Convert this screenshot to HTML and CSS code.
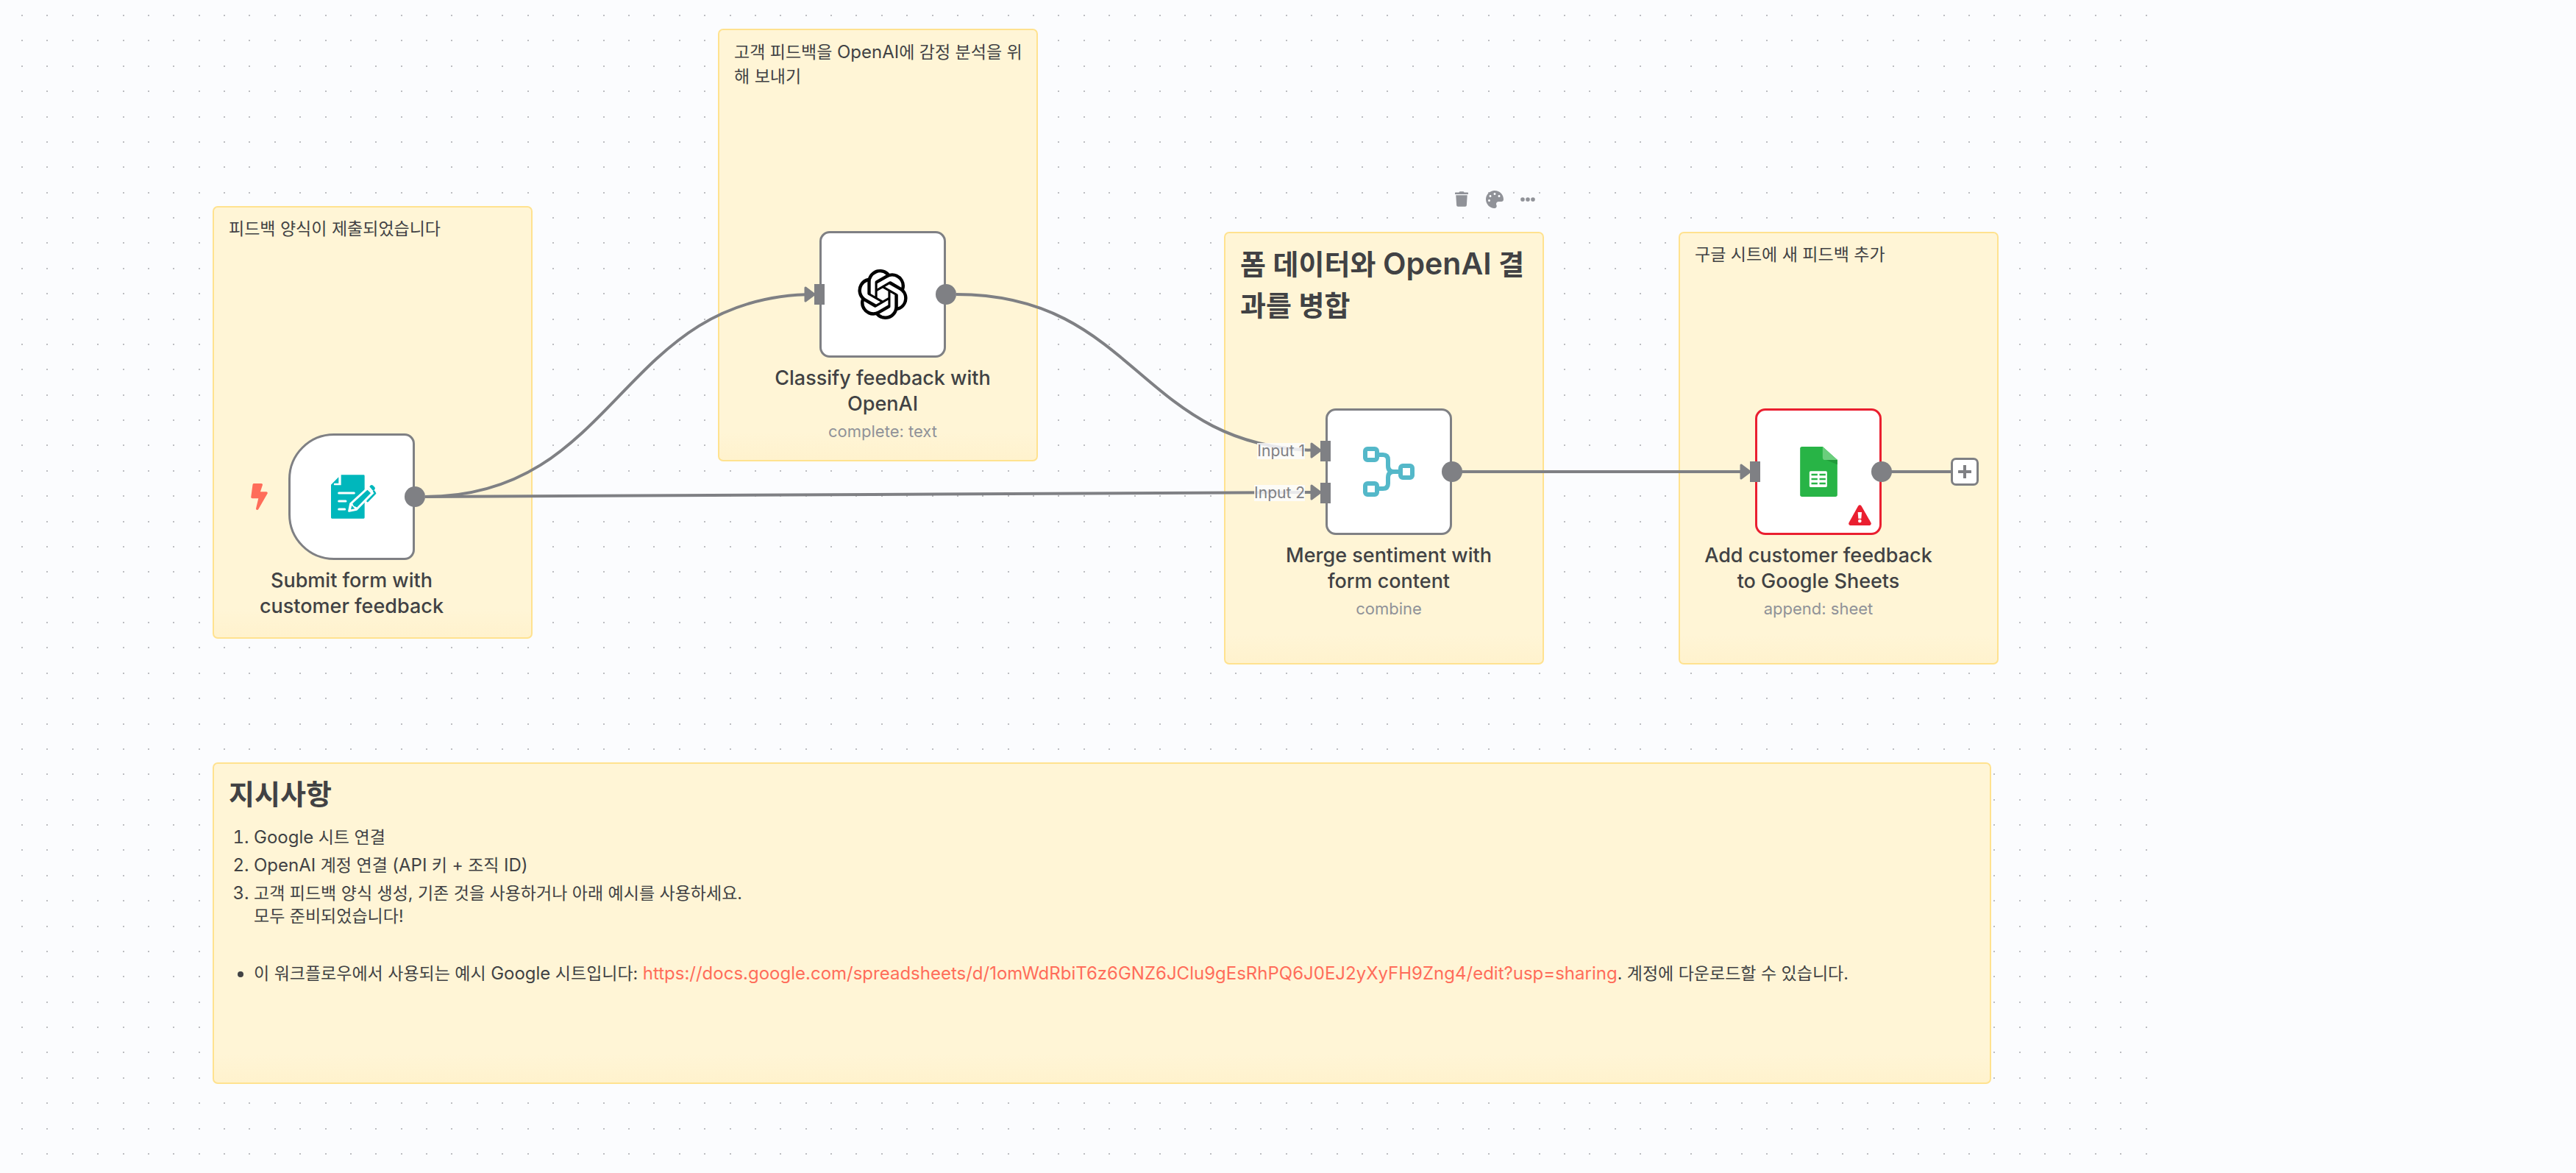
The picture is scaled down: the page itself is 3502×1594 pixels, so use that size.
FILE: index.html
```html
<!DOCTYPE html>
<html lang="ko">
<head>
<meta charset="utf-8">
<meta name="viewport" content="width=device-width, initial-scale=1">
<title>고객 피드백 워크플로우</title>
<link rel="stylesheet" href="styles.css">
</head>
<body>
<main class="canvas">
  <svg class="grid" aria-hidden="true">
    <defs>
      <pattern id="dots" x="29" y="20" width="275" height="275" patternUnits="userSpaceOnUse">
        <path d="M0 1h275M0 35h275M0 70h275M0 104h275M0 139h275M0 173h275M0 207h275M0 242h275" stroke="#bdbec2" stroke-width="2" stroke-dasharray="2 32 2 33 2 32 2 33 2 32 2 32 2 33 2 32"/>
      </pattern>
    </defs>
    <rect width="100%" height="100%" fill="url(#dots)"/>
  </svg>

  <section class="note note-form"><p>피드백 양식이 제출되었습니다</p></section>
  <section class="note note-openai"><p>고객 피드백을 <span lang="en">OpenAI</span>에 감정 분석을 위해 보내기</p></section>
  <section class="note note-merge">
    <div class="toolbar">
      <button type="button" aria-label="삭제"><svg width="18" height="21" viewBox="0 0 448 512"><path d="M432 32H312l-9.4-18.7A24 24 0 0 0 281.1 0H166.8a23.72 23.72 0 0 0-21.4 13.3L136 32H16A16 16 0 0 0 0 48v32a16 16 0 0 0 16 16h416a16 16 0 0 0 16-16V48a16 16 0 0 0-16-16zM53.2 467a48 48 0 0 0 47.9 45h245.8a48 48 0 0 0 47.9-45L416 128H32z"/></svg></button>
      <button type="button" aria-label="색상 변경"><svg width="24" height="24" viewBox="0 0 512 512"><path d="M204.3 5C104.9 24.4 24.8 104.3 5.2 203.4c-37 187 131.7 326.4 258.8 306.7 41.2-6.4 61.4-54.6 42.5-91.7-23.1-45.4 9.9-98.4 60.9-98.4h79.7c35.8 0 64.8-29.6 64.9-65.3C511.5 97.1 368.1-26.9 204.3 5zM96 320c-17.7 0-32-14.3-32-32s14.3-32 32-32 32 14.3 32 32-14.3 32-32 32zm32-128c-17.7 0-32-14.3-32-32s14.3-32 32-32 32 14.3 32 32-14.3 32-32 32zm128-64c-17.7 0-32-14.3-32-32s14.3-32 32-32 32 14.3 32 32-14.3 32-32 32zm128 64c-17.7 0-32-14.3-32-32s14.3-32 32-32 32 14.3 32 32-14.3 32-32 32z"/></svg></button>
      <button type="button" aria-label="더 보기"><svg width="20" height="6" viewBox="0 0 60 18"><circle cx="9" cy="9" r="8.5"/><circle cx="30" cy="9" r="8.5"/><circle cx="51" cy="9" r="8.5"/></svg></button>
    </div>
    <h2>폼 데이터와 <span lang="en">OpenAI</span> 결과를 병합</h2>
  </section>
  <section class="note note-sheets"><p>구글 시트에 새 피드백 추가</p></section>
  <section class="note note-guide">
    <h2>지시사항</h2>
    <ol>
      <li><span lang="en">Google</span> 시트 연결</li>
      <li><span lang="en">OpenAI</span> 계정 연결 <span lang="en">(API</span> 키 + 조직 <span lang="en">ID)</span></li>
      <li>고객 피드백 양식 생성, 기존 것을 사용하거나 아래 예시를 사용하세요.<br>모두 준비되었습니다!</li>
    </ol>
    <ul>
      <li>이 워크플로우에서 사용되는 예시 <span lang="en">Google</span> 시트입니다: <a lang="en" href="https://docs.google.com/spreadsheets/d/1omWdRbiT6z6GNZ6JClu9gEsRhPQ6J0EJ2yXyFH9Zng4/edit?usp=sharing">https://docs.google.com/spreadsheets/d/1omWdRbiT6z6GNZ6JClu9gEsRhPQ6J0EJ2yXyFH9Zng4/edit?usp=sharing</a>. 계정에 다운로드할 수 있습니다.</li>
    </ul>
  </section>

  <svg class="edges" aria-hidden="true">
    <defs>
      <marker id="arrow" markerUnits="userSpaceOnUse" markerWidth="18" markerHeight="26" refX="16" refY="13" orient="auto">
        <path d="M3 4L15 13L3 22Z" fill="#7f8084" stroke="#7f8084" stroke-width="3" stroke-linejoin="round"/>
      </marker>
    </defs>
    <path marker-end="url(#arrow)" d="M578 675C842 675 842 400 1108 400"/>
    <path marker-end="url(#arrow)" d="M578 675C1186 675 1186 669 1796 669"/>
    <path marker-end="url(#arrow)" d="M1300 400C1548 400 1548 612 1796 612"/>
    <path marker-end="url(#arrow)" d="M1987 641H2380"/>
    <path d="M2571 641H2653"/>
  </svg>

  <article class="node node-form">
    <div class="box trigger">
      <svg class="bolt" width="23" height="36" viewBox="0 0 320 512"><path fill="#ff6d5a" d="M296 160H180.6l42.6-129.8C227.2 15 215.7 0 200 0H56C44 0 33.8 8.9 32.2 20.8l-32 240C-1.7 275.2 9.5 288 24 288h118.7L96.6 482.5c-3.6 15.2 8 29.5 23.3 29.5 8.4 0 16.4-4.4 20.8-12l176-304c9.3-15.9-2.2-36-20.7-36z"/></svg>
      <svg class="form-icon" width="62" height="60" viewBox="361 45 186 180">
        <path fill="#00b7bc" d="M361 86L392 55V80H374Q370 84 374 88H402V46H494Q498 46 498 50V220Q498 224 494 224H365Q361 224 361 220Z"/>
        <path d="M393 120H455M393 153H421M393 186H417" stroke="#fff" stroke-width="9" stroke-linecap="round"/>
        <path fill="#00b7bc" stroke="#fff" stroke-width="9" stroke-linejoin="round" d="M435 193L441 164L515 96L533 116L465 187Z"/>
        <path fill="#fff" d="M433 196L441 164L447 160L454 173L466 178L464 188Z"/>
        <path fill="#00b7bc" d="M442 187L446 171L458 184Z"/>
        <path d="M506 99L529 121" stroke="#fff" stroke-width="7"/>
        <path fill="#00b7bc" d="M518 94Q524 84 532 89L539 96Q543 101 537 108L532 110Z"/>
        <path d="M536 113L541 121L510 153" fill="none" stroke="#00b7bc" stroke-width="8" stroke-linecap="round" stroke-linejoin="round"/>
      </svg>
      <span class="out"></span>
    </div>
    <h3>Submit form with customer feedback</h3>
  </article>

  <article class="node node-openai">
    <div class="box">
      <span class="in"></span>
      <svg width="68" height="68" viewBox="0 0 24 24"><path d="M22.2819 9.8211a5.9847 5.9847 0 0 0-.5157-4.9108 6.0462 6.0462 0 0 0-6.5098-2.9A6.0651 6.0651 0 0 0 4.9807 4.1818a5.9847 5.9847 0 0 0-3.9977 2.9 6.0462 6.0462 0 0 0 .7427 7.0966 5.98 5.98 0 0 0 .511 4.9107 6.051 6.051 0 0 0 6.5146 2.9001A5.9847 5.9847 0 0 0 13.2599 24a6.0557 6.0557 0 0 0 5.7718-4.2058 5.9894 5.9894 0 0 0 3.9977-2.9001 6.0557 6.0557 0 0 0-.7475-7.0729zm-9.022 12.6081a4.4755 4.4755 0 0 1-2.8764-1.0408l.1419-.0804 4.7783-2.7582a.7948.7948 0 0 0 .3927-.6813v-6.7369l2.02 1.1686a.071.071 0 0 1 .038.052v5.5826a4.504 4.504 0 0 1-4.4945 4.4944zm-9.6607-4.1254a4.4708 4.4708 0 0 1-.5346-3.0137l.142.0852 4.783 2.7582a.7712.7712 0 0 0 .7806 0l5.8428-3.3685v2.3324a.0804.0804 0 0 1-.0332.0615L9.74 19.9502a4.4992 4.4992 0 0 1-6.1408-1.6464zM2.3408 7.8956a4.485 4.485 0 0 1 2.3655-1.9728V11.6a.7664.7664 0 0 0 .3879.6765l5.8144 3.3543-2.0201 1.1685a.0757.0757 0 0 1-.071 0l-4.8303-2.7865A4.504 4.504 0 0 1 2.3408 7.872zm16.5963 3.8558L13.1038 8.364 15.1192 7.2a.0757.0757 0 0 1 .071 0l4.8303 2.7913a4.4944 4.4944 0 0 1-.6765 8.1042v-5.6772a.79.79 0 0 0-.407-.667zm2.0107-3.0231l-.142-.0852-4.7735-2.7818a.7759.7759 0 0 0-.7854 0L9.409 9.2297V6.8974a.0662.0662 0 0 1 .0284-.0615l4.8303-2.7866a4.4992 4.4992 0 0 1 6.6802 4.66zM8.3065 12.863l-2.02-1.1638a.0804.0804 0 0 1-.038-.0567V6.0742a4.4992 4.4992 0 0 1 7.3757-3.4537l-.142.0805L8.704 5.459a.7948.7948 0 0 0-.3927.6813zm1.0976-2.3654l2.602-1.4998 2.6069 1.4998v2.9994l-2.5974 1.4997-2.6067-1.4997Z"/></svg>
      <span class="out"></span>
    </div>
    <h3>Classify feedback with OpenAI</h3>
    <p>complete: text</p>
  </article>

  <article class="node node-merge">
    <div class="box">
      <span class="in first"><span class="label">Input 1</span></span>
      <span class="in second"><span class="label">Input 2</span></span>
      <svg width="70" height="68" viewBox="0 0 70 68" fill="none" stroke="#54b8c9" stroke-width="6">
        <rect x="3" y="3" width="16" height="15" rx="3"/>
        <rect x="3" y="50" width="16" height="15" rx="3"/>
        <rect x="51" y="26" width="16" height="16" rx="3"/>
        <path d="M21 11H27Q34 11 34 18V26Q34 34 42 34H49M21 57H27Q34 57 34 50V42Q34 34 42 34"/>
      </svg>
      <span class="out"></span>
    </div>
    <h3>Merge sentiment with form content</h3>
    <p>combine</p>
  </article>

  <article class="node node-sheets">
    <div class="box error">
      <span class="in"></span>
      <svg width="51" height="68" viewBox="49 51 152 204">
        <path fill="#28b446" d="M57 51H141L201 105V247Q201 255 193 255H57Q49 255 49 247V59Q49 51 57 51Z"/>
        <path fill="#219b3a" d="M153 104H201V124Z"/>
        <path fill="#6ace7c" d="M141 51L201 105H151Q141 105 141 95Z"/>
        <rect x="87" y="151" width="72" height="65" rx="5" fill="#fff"/>
        <path d="M95 165H120M128 165H153M95 183H120M128 183H153M95 201H120M128 201H153" stroke="#28b446" stroke-width="7"/>
      </svg>
      <span class="out"></span>
      <svg class="warning" width="31" height="28" viewBox="249 286 93 84">
        <path fill="#ea1f30" d="M288 291Q295 283 302 291L340 358Q344 366 336 370H255Q247 366 251 358Z"/>
        <path fill="#fff" d="M287 316H303L301 342H289Z"/><circle cx="295" cy="352" r="7" fill="#fff"/>
      </svg>
      <button class="add" type="button" aria-label="노드 추가"><svg width="18" height="18" viewBox="0 0 18 18"><path d="M9 1V17M1 9H17" stroke="#7f8084" stroke-width="4" stroke-linecap="round"/></svg></button>
    </div>
    <h3>Add customer feedback to Google Sheets</h3>
    <p>append: sheet</p>
  </article>
</main>
</body>
</html>
```
FILE: styles.css
```css
* { box-sizing: border-box; }

body {
  margin: 0;
  background: #fbfcfe;
  color: #414244;
  font-family: Inter, "Noto Sans CJK KR", sans-serif;
}

h2, h3, p, ol, ul { margin: 0; }
svg { display: block; }
button { font: inherit; cursor: pointer; }

.canvas {
  position: relative;
  min-height: 100vh;
  overflow: hidden;
}

.grid {
  position: absolute;
  inset: 0;
  width: 84%;
  height: 100%;
}

.edges {
  position: absolute;
  inset: 0;
  width: 100%;
  height: 100%;
  overflow: visible;
  fill: none;
  stroke: #7f8084;
  stroke-width: 4;
}

/* Sticky notes */
.note {
  position: absolute;
  width: 435px;
  height: 588px;
  padding: 13px 12px 13px 20px;
  border: 2px solid #ffe28f;
  border-radius: 7px;
  background: linear-gradient(#fff5d6 calc(100% - 38px), #fff2cd);
  font-size: 23px;
  line-height: 33px;
  word-break: break-all;
}

.note-form { left: 289px; top: 280px; }
.note-openai { left: 976px; top: 39px; }
.note-merge { left: 1664px; top: 315px; }
.note-sheets { left: 2282px; top: 315px; }
.note-guide { left: 289px; top: 1036px; width: 2418px; height: 437px; }

.note [lang="en"] { font-size: 24px; }

.note h2 {
  font-size: 38px;
  font-weight: 600;
  line-height: 56px;
}
.note h2 [lang="en"] { font-size: 41px; }

.note ol, .note ul {
  padding-left: 34px;
  line-height: 31px;
}
.note ol { margin-top: 15px; }
.note ul { margin-top: 46px; }
.note li + li { margin-top: 6px; }
.note li::marker { font-size: 24px; }
.note a { color: #ff6d5a; text-decoration: none; }

.toolbar {
  position: absolute;
  right: -2px;
  bottom: 100%;
  display: flex;
  padding-bottom: 24px;
}
.toolbar button {
  display: grid;
  place-items: center;
  width: 45px;
  height: 45px;
  padding: 0;
  border: 0;
  background: none;
  fill: #909298;
}

/* Nodes */
.node {
  position: absolute;
  display: flex;
  flex-direction: column;
  align-items: center;
  width: 320px;
  text-align: center;
}
.node-form { left: 318px; top: 589px; }
.node-openai { left: 1040px; top: 314px; }
.node-merge { left: 1728px; top: 555px; }
.node-sheets { left: 2312px; top: 555px; }

.node h3 {
  margin-top: 10px;
  font-size: 27px;
  font-weight: 500;
  line-height: 35px;
}
.node p {
  margin-top: 6px;
  color: #909298;
  font-size: 22px;
  line-height: 28px;
}

.box {
  position: relative;
  display: grid;
  place-items: center;
  width: 172px;
  height: 172px;
  border: 3px solid #7f8084;
  border-radius: 14px;
  background: #fff;
}
.box.trigger { border-radius: 62px 14px 14px 62px; }
.box.error { border-color: #ea1f30; }
.form-icon { margin-left: 6px; }

.out, .in {
  position: absolute;
  top: 69px;
  height: 28px;
  background: #7f8084;
}
.out { right: -17px; width: 28px; border-radius: 50%; }
.in { left: -10px; width: 14px; }
.in.first { top: 41px; }
.in.second { top: 98px; }

.label {
  position: absolute;
  right: 35px;
  top: 3px;
  background: rgba(252, 252, 253, 0.85);
  color: #7f8084;
  font-size: 21px;
  line-height: 22px;
  white-space: nowrap;
}

.bolt { position: absolute; left: -54px; top: 65px; }
.warning { position: absolute; right: 11px; bottom: 10px; }

.add {
  position: absolute;
  left: 263px;
  top: 64px;
  display: grid;
  place-items: center;
  width: 38px;
  height: 38px;
  padding: 0;
  border: 3px solid #7f8084;
  border-radius: 7px;
  background: #fff;
}
```
